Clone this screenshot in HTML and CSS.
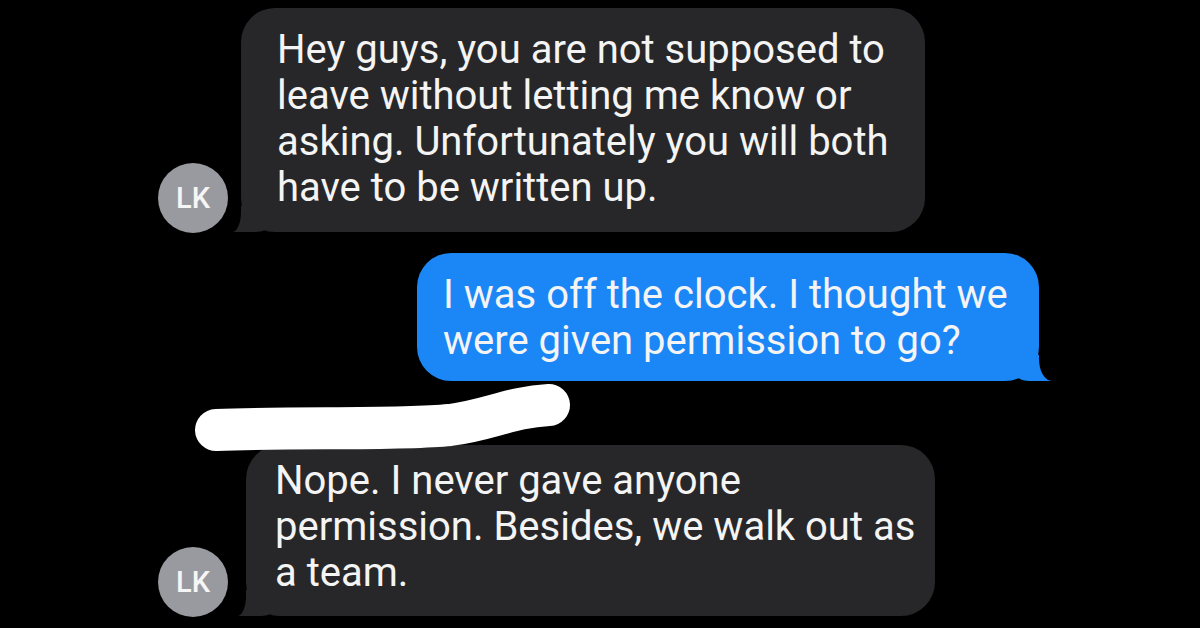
FILE: index.html
```html
<!DOCTYPE html>
<html>
<head>
  <meta charset="utf-8">
  <title>Messages</title>
  <link rel="stylesheet" href="styles.css">
</head>
<body>
  <div class="thread">

    <div class="msg in">
      <div class="avatar">LK</div>
      <div class="bubble gray first">Hey guys, you are not supposed to<br>leave without letting me know or<br>asking. Unfortunately you will both<br>have to be written up.</div>
    </div>

    <div class="msg out">
      <div class="bubble blue">I was off the clock. I thought we<br>were given permission to go?</div>
    </div>

    <div class="msg in last">
      <div class="avatar">LK</div>
      <div class="bubble gray second">Nope. I never gave anyone<br>permission. Besides, we walk out as<br>a team.</div>
    </div>

    <!-- name scribbled out -->
    <svg class="scribble" viewBox="0 0 1200 628" width="1200" height="628">
      <path d="M216 430 C 300 427, 400 430, 450 425 C 490 420, 510 407, 549 405"
            fill="none" stroke="#fff" stroke-width="42" stroke-linecap="round" stroke-linejoin="round"/>
    </svg>
  </div>
</body>
</html>
```

FILE: styles.css
```css
html, body { margin:0; padding:0; background:#000; }

body {
  font-family: Roboto, "Liberation Sans", sans-serif;
  color:#f4f4f4;
  width:1200px; height:628px; overflow:hidden;
}

.thread {
  position:relative;
  width:1200px; height:628px;
  box-sizing:border-box;
  padding:8px 161px 0 158px;
  display:flex; flex-direction:column;
}

.msg { display:flex; align-items:flex-end; }
.msg.out { justify-content:flex-end; margin-top:21px; }
.msg.last { margin-top:64px; }

.avatar {
  position:relative; z-index:1;
  width:70px; height:70px; flex:none;
  border-radius:50%;
  background:#999aa0;
  color:#f6f6f6;
  font-size:29px; font-weight:500;
  display:flex; align-items:center; justify-content:center;
  margin-right:13px;
  margin-bottom:-1px;
}

.bubble {
  position:relative;
  box-sizing:border-box;
  font-size:40px; line-height:46px;
  border-radius:34px;
  white-space:nowrap;
}

.bubble.gray { background:#272729; }
.bubble.first  { width:684px; padding:19px 20px 21px 36px; }
.bubble.second { width:689px; margin-left:5px; padding:13px 20px 20px 29px; }
.bubble.blue { background:#1b86f6; width:622px; padding:19px 20px 17px 26px; }

/* tails */
.bubble::before, .bubble::after {
  content:""; position:absolute; bottom:0;
}
.bubble.gray::before {
  left:-8px; width:40px; height:26px;
  border-bottom-right-radius:18px 12px;
  background:#272729;
}
.bubble.gray::after {
  right:100%; width:30px; height:30px;
  border-bottom-right-radius:9px 20px;
  background:#000;
}
.bubble.blue::before {
  right:-13px; width:40px; height:26px;
  border-bottom-left-radius:18px 12px;
  background:#1b86f6;
}
.bubble.blue::after {
  left:100%; width:30px; height:30px;
  border-bottom-left-radius:13px 22px;
  background:#000;
}

.scribble { position:absolute; left:0; top:0; pointer-events:none; }
```
